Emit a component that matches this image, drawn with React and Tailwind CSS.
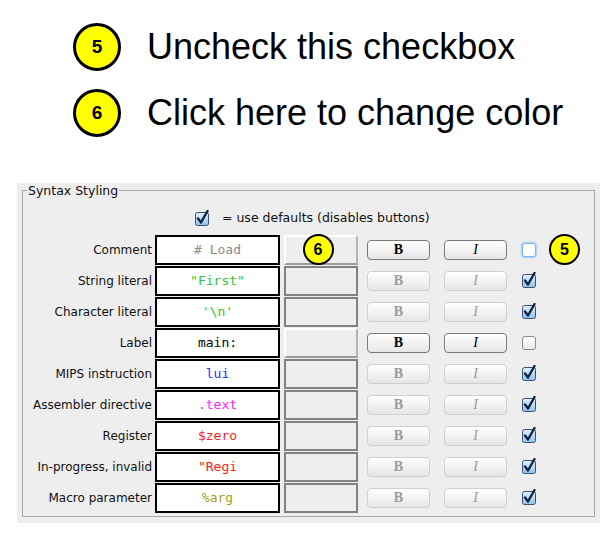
import React from "react";

const rows = [
  { label: "Comment", sample: "# Load", color: "text-[#8c8c8c]", enabled: true, checked: false, focus: true },
  { label: "String literal", sample: "\"First\"", color: "text-[#2fc42f]", checked: true },
  { label: "Character literal", sample: "'\\n'", color: "text-[#2fc42f]", checked: true },
  { label: "Label", sample: "main:", color: "text-black", enabled: true, checked: false },
  { label: "MIPS instruction", sample: "lui", color: "text-[#2b2bff]", checked: true },
  { label: "Assembler directive", sample: ".text", color: "text-[#ff22ff]", checked: true },
  { label: "Register", sample: "$zero", color: "text-[#ff1a1a]", checked: true },
  { label: "In-progress, invalid", sample: "\"Regi", color: "text-[#ff1a1a]", checked: true },
  { label: "Macro parameter", sample: "%arg", color: "text-[#a0a020]", checked: true },
];

const Badge = ({ n, big }) => (
  <div
    className={
      big
        ? "w-[48px] h-[48px] rounded-full bg-[#ffff00] border-[3px] border-black flex items-center justify-center text-[19px] font-bold text-black shrink-0"
        : "w-[31px] h-[31px] rounded-full bg-[#ffff00] border-[2.5px] border-black flex items-center justify-center text-[16px] font-bold text-black shrink-0"
    }
    style={{ fontFamily: "'Liberation Sans', Arial, sans-serif" }}
  >
    {n}
  </div>
);

const CheckBox = ({ checked, focus }) => {
  if (checked) {
    return (
      <svg width="16" height="16" viewBox="0 0 16 16" className="shrink-0 -mt-[2px]">
        <defs>
          <linearGradient id="cbg" x1="0" y1="0" x2="0" y2="1">
            <stop offset="0" stopColor="#e4f1ff" />
            <stop offset="1" stopColor="#8ec2ee" />
          </linearGradient>
        </defs>
        <rect x="0.5" y="2.5" width="13" height="13" rx="2" fill="url(#cbg)" stroke="#3d4f70" />
        <path d="M3 8.5 L6 12.5 L12.5 1" fill="none" stroke="#142544" strokeWidth="2.4" strokeLinecap="round" strokeLinejoin="round" />
      </svg>
    );
  }
  return (
    <div
      className={
        focus
          ? "w-[14px] h-[14px] rounded-[3px] bg-white border border-[#7fb2e6] shadow-[0_0_0_1.5px_#b9d8f6] shrink-0"
          : "w-[14px] h-[14px] rounded-[3px] bg-gradient-to-b from-white to-[#ececec] border border-[#8a8a8a] shrink-0"
      }
    />
  );
};

const StyleButton = ({ children, enabled, italic }) => (
  <div
    className={
      "w-[63px] h-[20px] rounded-[4px] border flex items-center justify-center text-[14px] bg-gradient-to-b from-white to-[#e6e6e6] " +
      (enabled ? "border-[#7a7a7a] text-black" : "border-[#cfcfcf] text-[#9a9a9a]") +
      (italic ? " italic" : " font-bold")
    }
    style={{ fontFamily: "'Liberation Serif', 'DejaVu Serif', serif" }}
  >
    {children}
  </div>
);

const App = () => {
  return (
    <div className="w-[615px] h-[539px] bg-white relative overflow-hidden">
      <div className="pt-[23px] pl-[73px] flex flex-col gap-[18px]">
        {[
          ["5", "Uncheck this checkbox"],
          ["6", "Click here to change color"],
        ].map(([n, t]) => (
          <div key={n} className="flex items-center gap-[26px] h-[48px]">
            <Badge n={n} big />
            <p
              className="text-[36px] text-black leading-none"
              style={{ fontFamily: "'Liberation Sans', Arial, sans-serif" }}
            >
              {t}
            </p>
          </div>
        ))}
      </div>

      <div
        className="mt-[46px] ml-[17px] w-[583px] h-[340px] bg-[#eeeeee] pt-[7px] px-[5px] pb-[6px] text-[12px] text-[#111111]"
        style={{ fontFamily: "'DejaVu Sans', Verdana, sans-serif" }}
      >
        <div className="h-full border border-[#a9a9a9] relative">
          <div className="absolute -top-[8px] left-[4px] px-[1px] bg-[#eeeeee] leading-[15px] text-[12.5px]">
            Syntax Styling
          </div>

          <div className="flex items-center gap-[11px] pl-[172px] pt-[19px] h-[36px]">
            <CheckBox checked />
            <span className="text-[12.5px]">= use defaults (disables buttons)</span>
          </div>

          <div className="flex flex-col mt-[7px] -ml-[6px]">
            {rows.map((r) => (
              <div key={r.label} className="flex items-center h-[31px]">
                <div className="w-[135px] text-right whitespace-nowrap">{r.label}</div>
                <div
                  className={
                    "ml-[3px] w-[125px] h-[30px] bg-white border-2 border-black flex items-center justify-center text-[13px] " +
                    r.color
                  }
                  style={{ fontFamily: "'DejaVu Sans Mono', 'Liberation Mono', monospace" }}
                >
                  {r.sample}
                </div>
                {r.enabled ? (
                  <div className="ml-[4px] w-[74px] h-[30px] bg-[#eeeeee] border-2 border-t-white border-l-white border-b-[#9c9c9c] border-r-[#b5b5b5] flex items-center justify-center">
                    {r.label === "Comment" && (
                      <div className="-ml-[6px]">
                        <Badge n="6" />
                      </div>
                    )}
                  </div>
                ) : (
                  <div className="ml-[4px] w-[74px] h-[30px] bg-[#eeeeee] border-2 border-[#828282]" />
                )}
                <div className="ml-[9px]">
                  <StyleButton enabled={r.enabled}>B</StyleButton>
                </div>
                <div className="ml-[14px]">
                  <StyleButton enabled={r.enabled} italic>
                    I
                  </StyleButton>
                </div>
                <div className="ml-[15px] w-[16px] flex items-center">
                  <CheckBox checked={r.checked} focus={r.focus} />
                </div>
                {r.label === "Comment" && (
                  <div className="ml-[11px]">
                    <Badge n="5" />
                  </div>
                )}
              </div>
            ))}
          </div>
        </div>
      </div>
    </div>
  );
};

export default App;
